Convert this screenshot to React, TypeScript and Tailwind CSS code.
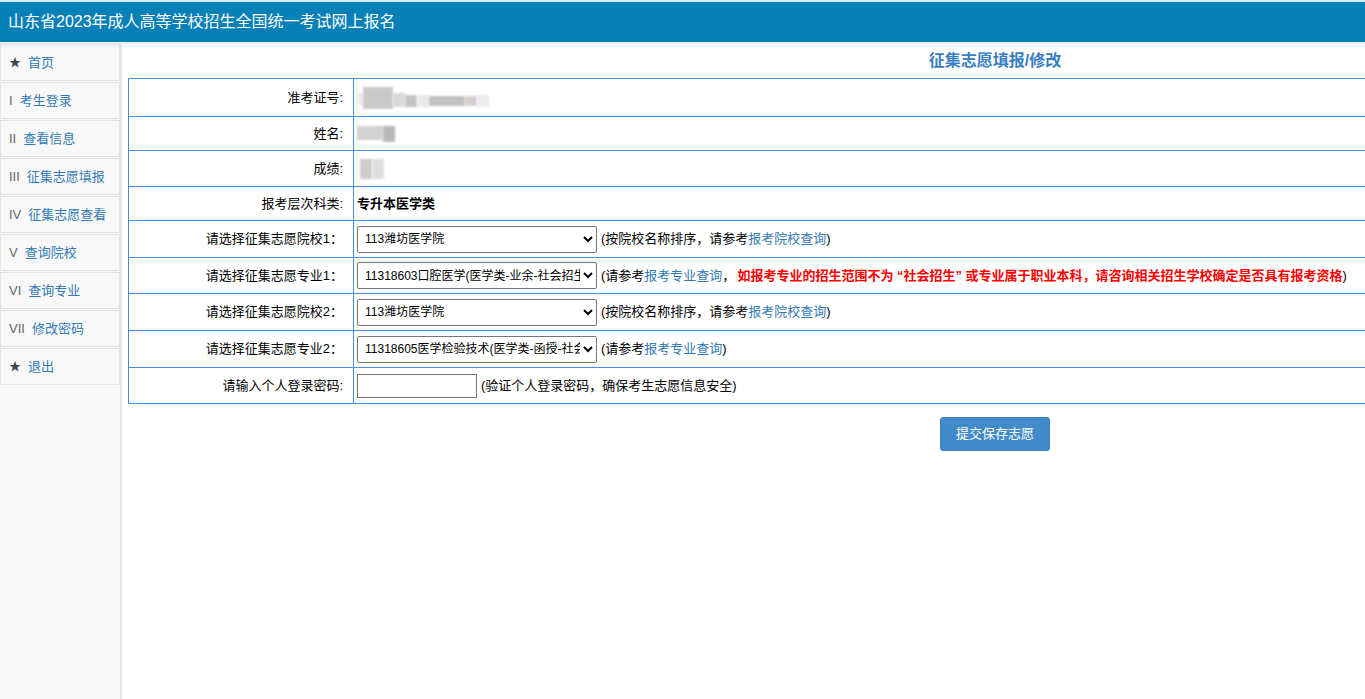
import React from "react";

const font = { fontFamily: '"Liberation Sans", "Noto Sans CJK SC", sans-serif' };

const navItems: { mark: string; label: string }[] = [
  { mark: "★", label: "首页" },
  { mark: "I", label: "考生登录" },
  { mark: "II", label: "查看信息" },
  { mark: "III", label: "征集志愿填报" },
  { mark: "IV", label: "征集志愿查看" },
  { mark: "V", label: "查询院校" },
  { mark: "VI", label: "查询专业" },
  { mark: "VII", label: "修改密码" },
  { mark: "★", label: "退出" },
];

function Blur({ blocks }: { blocks: { w: number; h: number; c: string; mt?: number }[] }) {
  return (
    <div className="flex items-start">
      {blocks.map((b, i) => (
        <div
          key={i}
          style={{ width: b.w, height: b.h, background: b.c, marginTop: b.mt ?? 0 }}
          className="blur-[1px]"
        />
      ))}
    </div>
  );
}

function Sel({ value }: { value: string }) {
  return (
    <select
      defaultValue={value}
      className="h-[27px] w-[240px] rounded-[2px] border border-[#767676] bg-white pl-[3px] text-[12px] text-black"
      style={font}
    >
      <option value={value}>{value}</option>
    </select>
  );
}

export default function App() {
  const rowLabel = "border border-[#4a8fd8] pr-[10px] text-right align-middle w-[225px]";
  const rowVal = "border border-[#4a8fd8] pl-[3px] align-middle";
  return (
    <div className="h-[699px] w-[1365px] overflow-hidden bg-white text-[13px] text-black" style={font}>
      <div className="h-[2px] bg-[#d9ecf5]" />
      <div className="flex h-[40px] items-center bg-[#0780b8] pl-[8px] text-[16px] text-white">
        山东省2023年成人高等学校招生全国统一考试网上报名
      </div>
      <div className="h-[2px] bg-[#ececec]" />
      <div className="flex h-[655px]">
        <div className="w-[122px] shrink-0 border-r-2 border-[#e6e6e6] bg-[#f8f8f8]">
          {navItems.map((n, i) => (
            <div
              key={i}
              className="mb-[1px] flex h-[37px] w-[120px] items-center border border-[#e3e3e3] bg-[#f8f8f8] pl-[8px]"
            >
              <span className={n.mark === "★" ? "text-[12px] text-[#444]" : "text-[13px] text-[#666]"}>{n.mark}</span>
              <span className="ml-[7px] text-[#337ab7]">{n.label}</span>
            </div>
          ))}
        </div>
        <div className="ml-[6px] w-[1734px] shrink-0">
          <div className="flex h-[34px] items-center justify-center text-[16px] font-bold text-[#3a7dc2]">
            征集志愿填报/修改
          </div>
          <table className="w-[1734px] border-collapse border border-[#4a8fd8]">
            <tbody>
              <tr className="h-[38px]">
                <td className={rowLabel}>准考证号:</td>
                <td className={rowVal}>
                  <Blur
                    blocks={[
                      { w: 6, h: 12, c: "#ececec", mt: 6 },
                      { w: 30, h: 22, c: "#c9c9c9" },
                      { w: 12, h: 14, c: "#d8d8d8", mt: 6 },
                      { w: 12, h: 12, c: "#c4c4c4", mt: 8 },
                      { w: 12, h: 12, c: "#e8e8e8", mt: 8 },
                      { w: 36, h: 10, c: "#c2c2c2", mt: 9 },
                      { w: 12, h: 10, c: "#d4d0cc", mt: 9 },
                      { w: 12, h: 12, c: "#ececf0", mt: 8 },
                    ]}
                  />
                </td>
              </tr>
              <tr className="h-[34px]">
                <td className={rowLabel}>姓名:</td>
                <td className={rowVal}>
                  <Blur
                    blocks={[
                      { w: 26, h: 14, c: "#d2d2d2" },
                      { w: 12, h: 16, c: "#b8b8bc" },
                    ]}
                  />
                </td>
              </tr>
              <tr className="h-[36px]">
                <td className={rowLabel}>成绩:</td>
                <td className={rowVal}>
                  <div className="ml-[3px]">
                    <Blur
                      blocks={[
                        { w: 12, h: 20, c: "#cfcccc" },
                        { w: 12, h: 20, c: "#e0dede" },
                      ]}
                    />
                  </div>
                </td>
              </tr>
              <tr className="h-[34px]">
                <td className={rowLabel}>报考层次科类:</td>
                <td className={rowVal + " font-bold"}>专升本医学类</td>
              </tr>
              <tr className="h-[37px]">
                <td className={rowLabel}>请选择征集志愿院校1：</td>
                <td className={rowVal}>
                  <div className="flex items-center">
                    <Sel value="113潍坊医学院" />
                    <span className="ml-[4px]">
                      (按院校名称排序，请参考<span className="text-[#337ab7]">报考院校查询</span>)
                    </span>
                  </div>
                </td>
              </tr>
              <tr className="h-[36px]">
                <td className={rowLabel}>请选择征集志愿专业1：</td>
                <td className={rowVal}>
                  <div className="flex items-center whitespace-nowrap">
                    <Sel value="11318603口腔医学(医学类-业余-社会招生)" />
                    <span className="ml-[4px]">
                      (请参考<span className="text-[#337ab7]">报考专业查询</span>，
                      <span className="ml-[2px] font-bold text-[#ff0000]">
                        如报考专业的招生范围不为 “社会招生” 或专业属于职业本科，请咨询相关招生学校确定是否具有报考资格
                      </span>
                      )
                    </span>
                  </div>
                </td>
              </tr>
              <tr className="h-[37px]">
                <td className={rowLabel}>请选择征集志愿院校2：</td>
                <td className={rowVal}>
                  <div className="flex items-center">
                    <Sel value="113潍坊医学院" />
                    <span className="ml-[4px]">
                      (按院校名称排序，请参考<span className="text-[#337ab7]">报考院校查询</span>)
                    </span>
                  </div>
                </td>
              </tr>
              <tr className="h-[37px]">
                <td className={rowLabel}>请选择征集志愿专业2：</td>
                <td className={rowVal}>
                  <div className="flex items-center">
                    <Sel value="11318605医学检验技术(医学类-函授-社会招生)" />
                    <span className="ml-[4px]">
                      (请参考<span className="text-[#337ab7]">报考专业查询</span>)
                    </span>
                  </div>
                </td>
              </tr>
              <tr className="h-[36px]">
                <td className={rowLabel}>请输入个人登录密码:</td>
                <td className={rowVal}>
                  <div className="flex items-center">
                    <input
                      type="password"
                      className="h-[24px] w-[120px] border border-[#767676] bg-white"
                    />
                    <span className="ml-[4px]">(验证个人登录密码，确保考生志愿信息安全)</span>
                  </div>
                </td>
              </tr>
            </tbody>
          </table>
          <div className="mt-[13px] flex justify-center">
            <button className="h-[34px] w-[110px] rounded-[3px] border border-[#3a80c0] bg-[#428bca] text-[13px] text-white" style={font}>
              提交保存志愿
            </button>
          </div>
        </div>
      </div>
    </div>
  );
}
